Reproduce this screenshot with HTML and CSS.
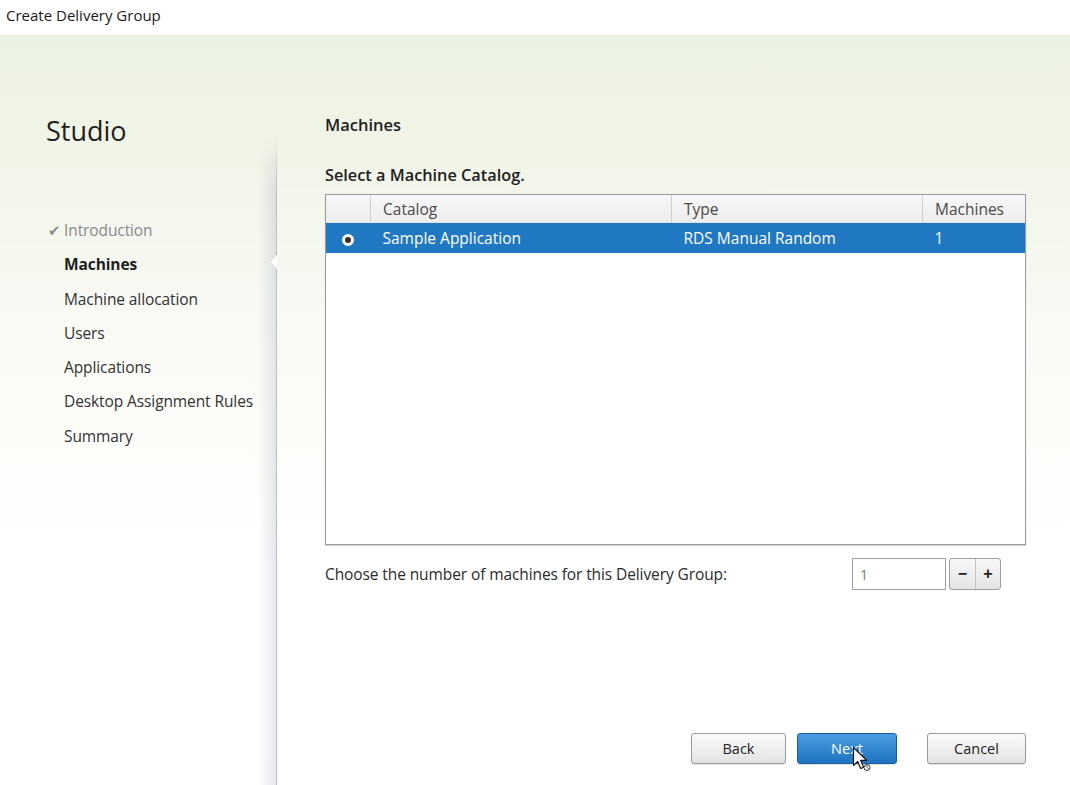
FILE: index.html
```html
<!DOCTYPE html>
<html lang="en">
<head>
    <meta charset="UTF-8">
    <title>Create Delivery Group</title>
    <link rel="stylesheet" href="styles.css">
</head>
<body>
    <header class="titlebar">Create Delivery Group</header>
    <div class="wizard">
        <aside class="sidebar">
            <h1 class="brand">Studio</h1>
            <ul class="steps">
                <li class="done"><span class="check">&#10004;</span>Introduction</li>
                <li class="current">Machines</li>
                <li>Machine allocation</li>
                <li>Users</li>
                <li>Applications</li>
                <li>Desktop Assignment Rules</li>
                <li>Summary</li>
            </ul>
        </aside>
        <div class="divider"><span class="notch"></span></div>
        <main class="content">
            <h2 class="page-title">Machines</h2>
            <p class="lead">Select a Machine Catalog.</p>
            <div class="grid">
                <table>
                    <thead>
                        <tr>
                            <th class="col-radio"></th>
                            <th class="col-catalog">Catalog</th>
                            <th class="col-type">Type</th>
                            <th class="col-count">Machines</th>
                        </tr>
                    </thead>
                    <tbody>
                        <tr class="selected">
                            <td class="col-radio"><span class="radio"></span></td>
                            <td>Sample Application</td>
                            <td>RDS Manual Random</td>
                            <td>1</td>
                        </tr>
                    </tbody>
                </table>
            </div>
            <div class="count-row">
                <label for="machineCount">Choose the number of machines for this Delivery Group:</label>
                <div class="spinner">
                    <input type="text" id="machineCount" value="1">
                    <div class="spin-buttons">
                        <button type="button">&minus;</button>
                        <button type="button">+</button>
                    </div>
                </div>
            </div>
            <div class="actions">
                <button type="button" class="btn">Back</button>
                <button type="button" class="btn primary">Next
                    <svg class="cursor" width="20" height="26" viewBox="0 0 20 26">
                        <path d="M1.5 1.5v18l4.2-4 3 7 3-1.3-3-6.8h6z" fill="#fff" stroke="#111" stroke-width="1.2" stroke-linejoin="round"/>
                        <circle cx="15" cy="21.5" r="3" fill="#fff" stroke="#333" stroke-width="1"/>
                        <path d="M15 19.5v2l1.4 1" fill="none" stroke="#333" stroke-width="0.9"/>
                    </svg>
                </button>
                <button type="button" class="btn cancel">Cancel</button>
            </div>
        </main>
    </div>
</body>
</html>
```

FILE: styles.css
```css
body {
    margin: 0;
    font-family: "Open Sans", "Noto Sans", sans-serif;
    color: #2b2b2b;
    background: #fff;
    width: 1070px;
    height: 785px;
    overflow: hidden;
}
.titlebar {
    height: 35px;
    line-height: 30px;
    padding-left: 6px;
    font-size: 15px;
    color: #1a1a1a;
    background: #fff;
}
.wizard {
    display: flex;
    height: 750px;
    background: linear-gradient(to bottom, #ecf2e1 0, #f1f5e8 120px, #f7f9f2 260px, #fcfdf9 400px, #fff 520px);
}
.sidebar {
    width: 260px;
    padding-left: 46px;
    box-sizing: border-box;
}
.brand {
    margin: 80px 0 0;
    font-size: 27px;
    line-height: 32px;
    font-weight: normal;
    color: #222;
}
.steps {
    list-style: none;
    margin: 66px 0 0;
    padding: 0 0 0 18px;
    font-size: 15.5px;
    line-height: 34.3px;
    letter-spacing: -0.1px;
    color: #333;
    white-space: nowrap;
}
.steps li.done {
    color: #8a8a8a;
}
.steps li.current {
    font-weight: bold;
    color: #1e1e1e;
}
.check {
    display: inline-block;
    width: 16px;
    margin-left: -16px;
    font-size: 15px;
    color: #8a8a8a;
}
.divider {
    position: relative;
    width: 18px;
    margin-left: -2px;
    background: linear-gradient(to right, rgba(150, 160, 175, 0) 0, rgba(150, 160, 175, 0.24) 100%);
    border-right: 1px solid #bbbec3;
    -webkit-mask-image: linear-gradient(to bottom, transparent 100px, #000 150px, #000 100%);
    mask-image: linear-gradient(to bottom, transparent 100px, #000 150px, #000 100%);
}
.notch {
    position: absolute;
    right: -1px;
    top: 220px;
    width: 0;
    height: 0;
    border-top: 7px solid transparent;
    border-bottom: 7px solid transparent;
    border-right: 6px solid #fff;
}
.content {
    flex: 1;
    display: flex;
    flex-direction: column;
    padding: 80px 44px 21px 48px;
}
.page-title {
    margin: 0;
    font-size: 16.5px;
    line-height: 20px;
    font-weight: 600;
    color: #222;
}
.lead {
    margin: 30px 0 0;
    font-size: 16.3px;
    line-height: 20px;
    font-weight: 600;
    color: #222;
}
.grid {
    margin-top: 9px;
    height: 351px;
    border: 1px solid #9a9a9a;
    box-shadow: 0 1px 1px rgba(0, 0, 0, 0.15);
    background: #fff;
    box-sizing: border-box;
}
table {
    width: 100%;
    border-collapse: collapse;
    font-size: 15.5px;
    white-space: nowrap;
}
th {
    height: 27px;
    padding: 0 0 0 12px;
    text-align: left;
    font-weight: normal;
    color: #4a4a4a;
    background: linear-gradient(to bottom, #f7f7f7, #ededed);
    border-right: 1px solid #d0d0d0;
    border-bottom: 1px solid #e0e0e0;
}
th:last-child {
    border-right: none;
}
.col-radio {
    width: 44px;
    padding: 0;
}
.col-catalog {
    width: 288px;
}
.col-type {
    width: 238px;
}
td {
    height: 30px;
    padding: 0 0 0 12px;
}
tr.selected td {
    background: #1f78c1;
    color: #fff;
}
td.col-radio {
    padding: 0;
    text-align: center;
}
.radio {
    display: inline-block;
    width: 6px;
    height: 6px;
    border-radius: 50%;
    background: #3a2a22;
    border: 3px solid #fff;
    vertical-align: middle;
}
.count-row {
    display: flex;
    align-items: center;
    justify-content: space-between;
    margin-top: 13px;
    font-size: 15.5px;
    letter-spacing: -0.1px;
    color: #2b2b2b;
}
.spinner {
    display: flex;
    align-items: center;
    gap: 3px;
    margin-right: 25px;
}
.spinner input {
    width: 94px;
    height: 32px;
    box-sizing: border-box;
    border: 1px solid #9e9e9e;
    padding: 0 7px;
    font: inherit;
    font-size: 14px;
    color: #777;
    background: #fff;
}
.spin-buttons {
    display: flex;
    border: 1px solid #9e9e9e;
    border-radius: 3px;
    overflow: hidden;
    background: linear-gradient(to bottom, #f7f7f7, #e4e4e4);
}
.spin-buttons button {
    width: 25px;
    height: 30px;
    border: none;
    background: transparent;
    font: bold 16px "Liberation Sans", sans-serif;
    color: #222;
    padding: 0;
}
.spin-buttons button + button {
    border-left: 1px solid #c4c4c4;
}
.actions {
    margin-top: auto;
    display: flex;
    justify-content: flex-end;
    gap: 11px;
}
.btn {
    position: relative;
    width: 95px;
    height: 31px;
    border: 1px solid #9a9a9a;
    border-radius: 3px;
    background: linear-gradient(to bottom, #fbfbfb, #e3e3e3);
    font: 14.5px "Open Sans", sans-serif;
    color: #222;
    box-shadow: 0 1px 1px rgba(0, 0, 0, 0.12);
}
.btn.primary {
    width: 100px;
    border-color: #1a5d9c;
    background: linear-gradient(to bottom, #4b9be0, #1f74c0);
    color: #fff;
}
.btn.cancel {
    width: 99px;
    margin-left: 19px;
}
.cursor {
    position: absolute;
    left: 54px;
    top: 12px;
}
```
